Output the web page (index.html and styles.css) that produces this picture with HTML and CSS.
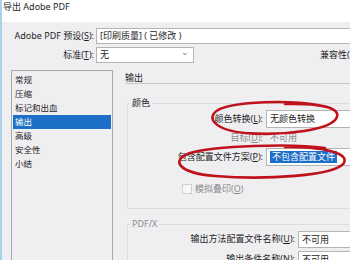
FILE: index.html
```html
<!DOCTYPE html>
<html>
<head>
  <meta charset="UTF-8" />
  <title>导出 Adobe PDF</title>
  <link rel="stylesheet" href="styles.css">
</head>
<body>
  <div class="window">
    <div class="titlebar">导出 Adobe PDF</div>

    <div class="top-rows">
      <div class="row">
        <span class="label">Adobe PDF 预设(<u>S</u>):</span>
        <div class="field wide">[印刷质量] ( 已修改 )</div>
      </div>
      <div class="row">
        <span class="label">标准(<u>T</u>):</span>
        <div class="field select">无<span class="chev">&#8964;</span></div>
        <span class="compat">兼容性(</span>
      </div>
    </div>

    <div class="body">
      <ul class="nav">
        <li>常规</li>
        <li>压缩</li>
        <li>标记和出血</li>
        <li class="active">输出</li>
        <li>高级</li>
        <li>安全性</li>
        <li>小结</li>
      </ul>

      <div class="panel">
        <div class="panel-title">输出</div>

        <fieldset class="group">
          <legend>颜色</legend>
          <div class="frow first">
            <span class="flabel">颜色转换(<u>L</u>):</span>
            <div class="field">无颜色转换</div>
          </div>
          <div class="frow disabled">
            <span class="flabel">目标(<u>D</u>):</span>
            <span class="value">不可用</span>
          </div>
          <div class="frow third">
            <span class="flabel">包含配置文件方案(<u>P</u>):</span>
            <div class="field"><span class="picked">不包含配置文件</span></div>
          </div>
          <div class="check disabled">
            <span class="box"></span>模拟叠印(<u>O</u>)
          </div>
        </fieldset>

        <fieldset class="group pdfx-group">
          <legend>PDF/X</legend>
          <div class="frow narrow">
            <span class="flabel">输出方法配置文件名称(<u>U</u>):</span>
            <div class="field">不可用</div>
          </div>
          <div class="frow narrow">
            <span class="flabel">输出条件名称(<u>N</u>):</span>
            <div class="field">不可用</div>
          </div>
        </fieldset>
      </div>
    </div>

    <!-- hand drawn red marks -->
    <svg class="marks" width="350" height="260" viewBox="0 0 350 260">
      <path d="M318 105 C 290 100, 235 101, 218 110 C 205 118, 215 130, 245 133 C 285 136, 332 130, 337 117 C 340 107, 318 103, 285 104"/>
      <path d="M325 148 C 290 143, 215 146, 190 153 C 170 160, 178 173, 215 176 C 265 180, 335 176, 344 163 C 349 153, 325 147, 285 147"/>
    </svg>
  </div>
</body>
</html>
```

FILE: styles.css
```css
body {
  margin: 0;
  padding: 0;
  font-family: "Noto Sans", "Noto Sans CJK SC", sans-serif;
  font-size: 9px;
  line-height: 12px;
  color: #1e1e1e;
}
u {
  text-decoration: underline;
  text-underline-offset: 1px;
}
.window {
  position: relative;
  width: 348px;
  height: 260px;
  overflow: hidden;
  background-color: #efeef1;
  border-left: 2px solid #a8d2ea;
}
.titlebar {
  height: 22px;
  line-height: 14px;
  padding-left: 1px;
  background-color: #fff;
  white-space: nowrap;
}
.top-rows {
  padding-top: 6px;
}
.row {
  display: flex;
  align-items: center;
  height: 16px;
  margin-bottom: 3px;
  white-space: nowrap;
}
.label {
  width: 92px;
  text-align: right;
  padding-right: 2px;
  flex-shrink: 0;
}
.field {
  height: 16px;
  line-height: 14px;
  box-sizing: border-box;
  background-color: #fff;
  border: 1px solid #b4b4b4;
  padding-left: 3px;
  white-space: nowrap;
  flex-shrink: 0;
}
.wide {
  width: 300px;
}
.select {
  position: relative;
  width: 98px;
}
.chev {
  position: absolute;
  right: 4px;
  top: -3px;
  color: #777;
  font-size: 9px;
}
.compat {
  margin-left: 126px;
}
.body {
  display: flex;
  margin-top: 7px;
}
.nav {
  list-style: none;
  margin: 0 0 0 9px;
  padding: 2px 1px 0 1px;
  width: 98px;
  height: 200px;
  border: 1px solid #a9a9a9;
  flex-shrink: 0;
  font-size: 8.5px;
}
.nav li {
  height: 14px;
  line-height: 14px;
  padding-left: 2px;
  white-space: nowrap;
}
.nav li.active {
  background-color: #1d6fc7;
  color: #fff;
}
.panel {
  flex: 1;
  margin-left: 12px;
  min-width: 0;
}
.panel-title {
  padding-top: 2px;
  height: 11px;
  line-height: 11px;
  border-bottom: 1px solid #c7c7c7;
}
.group {
  margin: 14px 0 0 2px;
  padding: 0;
  border: 1px solid #dcdbdd;
  border-right: none;
  width: 240px;
  min-width: 0;
}
.group legend {
  padding: 0 2px;
  margin-left: 2px;
  line-height: 10px;
}
.disabled {
  color: #8c8c8c;
}
.frow {
  display: flex;
  align-items: center;
  height: 18px;
  white-space: nowrap;
}
.frow.first {
  height: 21px;
}
.frow.third {
  height: 19px;
}
.frow .field {
  height: 18px;
  line-height: 16px;
  width: 100px;
}
.flabel {
  width: 135px;
  text-align: right;
  padding-right: 3px;
  flex-shrink: 0;
}
.value {
  padding-left: 4px;
}
.picked {
  display: inline-block;
  background-color: #1d6fc7;
  color: #fff;
  padding: 0 2px;
  line-height: 12px;
}
.check {
  display: flex;
  align-items: center;
  margin: 17px 0 13px 54px;
  height: 12px;
}
.box {
  width: 8px;
  height: 8px;
  border: 1px solid #cfcfcf;
  background-color: #f7f7f7;
  margin-right: 3px;
}
.pdfx-group {
  margin-top: 10px;
}
.pdfx-group legend {
  color: #8c8c8c;
}
.frow.narrow {
  height: 20px;
}
.frow.narrow .flabel {
  width: 167px;
}
.frow.narrow .field {
  height: 17px;
}
.marks {
  position: absolute;
  left: -2px;
  top: 0;
  pointer-events: none;
  fill: none;
  stroke: #c0121b;
  stroke-width: 2.6;
  stroke-linecap: round;
}
```
